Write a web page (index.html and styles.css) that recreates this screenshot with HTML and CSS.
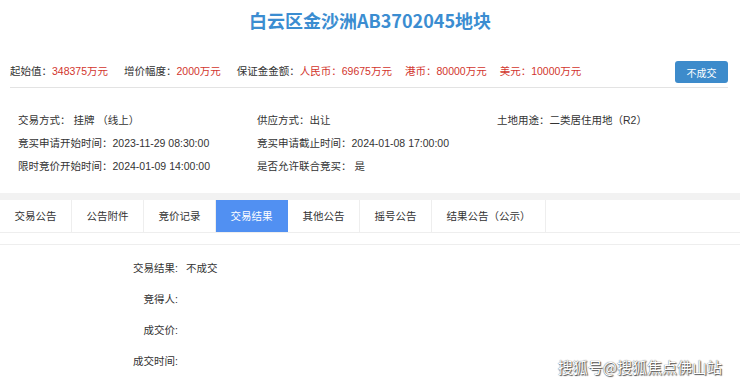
FILE: index.html
```html
<!DOCTYPE html>
<html lang="zh-CN">
<head>
    <meta charset="UTF-8">
    <meta name="viewport" content="width=device-width, initial-scale=1.0">
    <title>白云区金沙洲AB3702045地块</title>
    <link rel="stylesheet" href="styles.css">
</head>
<body>
    <h1 class="title">白云区金沙洲AB3702045地块</h1>

    <div class="price-bar">
        <div class="prices">
            <span>起始值：<em>348375万元</em></span>
            <span>增价幅度：<em>2000万元</em></span>
            <span>保证金金额：<em>人民币：69675万元</em><em>港币：80000万元</em><em>美元：10000万元</em></span>
        </div>
        <button class="status-btn">不成交</button>
    </div>

    <div class="details">
        <div>交易方式：&nbsp;挂牌 （线上）</div>
        <div>供应方式：出让</div>
        <div>土地用途：二类居住用地（R2）</div>
        <div>竞买申请开始时间：2023-11-29 08:30:00</div>
        <div>竞买申请截止时间：2024-01-08 17:00:00</div>
        <div></div>
        <div>限时竞价开始时间：2024-01-09 14:00:00</div>
        <div>是否允许联合竞买：&nbsp;是</div>
    </div>

    <div class="band"></div>

    <ul class="tabs">
        <li>交易公告</li>
        <li>公告附件</li>
        <li>竞价记录</li>
        <li class="active">交易结果</li>
        <li>其他公告</li>
        <li>摇号公告</li>
        <li>结果公告（公示）</li>
    </ul>

    <div class="result">
        <div class="row"><span class="label">交易结果:</span><span>不成交</span></div>
        <div class="row"><span class="label">竞得人:</span><span></span></div>
        <div class="row"><span class="label">成交价:</span><span></span></div>
        <div class="row"><span class="label">成交时间:</span><span></span></div>
    </div>

    <div class="watermark">搜狐号@搜狐焦点佛山站</div>
</body>
</html>
```

FILE: styles.css
```css
body {
    margin: 0;
    background-color: #fff;
    font-family: "Liberation Sans", "Noto Sans CJK SC", sans-serif;
    font-size: 10.5px;
    color: #333;
    overflow: hidden;
}
.title {
    margin: 0;
    padding-top: 6px;
    line-height: 28px;
    font-family: "Noto Sans CJK SC", sans-serif;
    font-size: 18px;
    font-weight: bold;
    color: #3b8dd1;
    text-align: center;
}
.price-bar {
    display: flex;
    align-items: center;
    justify-content: space-between;
    margin: 27px 12px 0 10px;
    padding-bottom: 4px;
    border-bottom: 1px solid #e3e3e3;
}
.prices {
    padding-bottom: 4px;
}
.prices span {
    margin-right: 13px;
}
.prices em {
    font-style: normal;
    color: #d2352d;
}
.prices em + em {
    margin-left: 13px;
}
.status-btn {
    width: 53px;
    height: 22px;
    border: none;
    border-radius: 3px;
    background-color: #3d8bcb;
    color: #fff;
    font-family: inherit;
    font-size: 10px;
    cursor: pointer;
}
.details {
    display: grid;
    grid-template-columns: 239px 240px 1fr;
    grid-auto-rows: 23px;
    align-items: center;
    padding: 20px 18px 16px;
}
.band {
    height: 7px;
    background-color: #f2f2f2;
}
.tabs {
    display: flex;
    margin: 0;
    padding: 0;
    list-style-type: none;
    border-bottom: 1px solid #eeeeee;
}
.tabs li {
    padding: 0 14.5px;
    line-height: 32px;
    border-right: 1px solid #eeeeee;
    color: #333;
}
.tabs li.active {
    background-color: #5190f2;
    border-right-color: #5190f2;
    color: #fff;
}
.result {
    margin-top: 11px;
    border-top: 1px solid #eeeeee;
    padding-top: 8px;
}
.row {
    display: flex;
    gap: 8px;
    line-height: 31px;
}
.label {
    width: 178px;
    text-align: right;
}
.watermark {
    position: absolute;
    right: 18px;
    bottom: 6px;
    font-family: "Noto Sans CJK SC", sans-serif;
    font-size: 15px;
    color: #fff;
    text-shadow: 0 0 1px #333, 1px 1px 1px #555;
}
```
